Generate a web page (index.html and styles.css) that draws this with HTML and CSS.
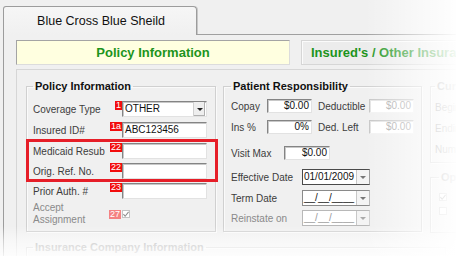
FILE: index.html
```html
<!DOCTYPE html>
<html>
<head>
    <meta charset="utf-8">
    <link rel="stylesheet" href="styles.css">
</head>
<body>
    <div class="window">
        <div class="tabstrip">
            <div class="tab">Blue Cross Blue Sheild</div>
            <div class="tabfill"></div>
        </div>
        <div class="tabpanel">
            <div class="pagetabs">
                <div class="pagetab active">Policy Information</div>
                <div class="pagetab">Insured's / Other Insurance</div>
            </div>
            <div class="page">
                <div class="groups">
                    <fieldset class="group policy">
                        <legend>Policy Information</legend>
                        <div class="row">
                            <span class="label">Coverage Type</span>
                            <span class="badge">1</span>
                            <div class="select">
                                <span class="value">OTHER</span>
                                <span class="dropbtn"><i class="arrow"></i></span>
                            </div>
                        </div>
                        <div class="row next">
                            <span class="label">Insured ID#</span>
                            <span class="badge">1a</span>
                            <div class="input">ABC123456</div>
                        </div>
                        <div class="highlight">
                            <div class="row">
                                <span class="label">Medicaid Resub</span>
                                <span class="badge">22</span>
                                <div class="input"></div>
                            </div>
                            <div class="row">
                                <span class="label">Orig. Ref. No.</span>
                                <span class="badge">22</span>
                                <div class="input"></div>
                            </div>
                        </div>
                        <div class="row after">
                            <span class="label">Prior Auth. #</span>
                            <span class="badge">23</span>
                            <div class="input"></div>
                        </div>
                        <div class="row accept">
                            <span class="label dim">Accept<br>Assignment</span>
                            <span class="badge off">27</span>
                            <div class="checkcell">
                                <span class="check">
                                    <svg width="7" height="7" viewBox="0 0 7 7"><polyline points="0.5,3 2.5,5.5 6.5,0.5" fill="none" stroke="#8a8a8a" stroke-width="1.2"/></svg>
                                </span>
                            </div>
                        </div>
                    </fieldset>

                    <fieldset class="group patient">
                        <legend>Patient Responsibility</legend>
                        <div class="money">
                            <span class="label">Copay</span>
                            <div class="input num">$0.00</div>
                            <span class="label second">Deductible</span>
                            <div class="input num off">$0.00</div>
                            <span class="label">Ins %</span>
                            <div class="input num">0%</div>
                            <span class="label second">Ded. Left</span>
                            <div class="input num off">$0.00</div>
                        </div>
                        <div class="prow visit">
                            <span class="label">Visit Max</span>
                            <div class="input num">$0.00</div>
                        </div>
                        <div class="prow date effective">
                            <span class="label">Effective Date</span>
                            <div class="datebox">
                                <span class="value">01/01/2009</span>
                                <span class="dropbtn"><i class="arrow"></i></span>
                            </div>
                        </div>
                        <div class="prow date term">
                            <span class="label">Term Date</span>
                            <div class="datebox">
                                <span class="value">__/__/____</span>
                                <span class="dropbtn"><i class="arrow"></i></span>
                            </div>
                        </div>
                        <div class="prow date reinstate">
                            <span class="label dim">Reinstate on</span>
                            <div class="datebox off">
                                <span class="value">__/__/____</span>
                                <span class="dropbtn"><i class="arrow"></i></span>
                            </div>
                        </div>
                    </fieldset>

                    <div class="sidecol">
                        <fieldset class="group current">
                            <legend>Current</legend>
                            <div class="crow"><span class="label dim">Beginning</span></div>
                            <div class="crow"><span class="label dim">Ending</span></div>
                            <div class="crow"><span class="label dim">Number</span></div>
                        </fieldset>
                        <fieldset class="group options">
                            <legend>Options</legend>
                            <div class="orow">
                                <span class="check">
                                    <svg width="7" height="7" viewBox="0 0 7 7"><polyline points="0.5,3 2.5,5.5 6.5,0.5" fill="none" stroke="#8a8a8a" stroke-width="1.2"/></svg>
                                </span>
                            </div>
                            <div class="orow"><span class="check"></span></div>
                        </fieldset>
                    </div>
                </div>

                <fieldset class="group insurance">
                    <legend>Insurance Company Information</legend>
                    <div class="crow"></div>
                </fieldset>
            </div>
        </div>
        <div class="fade"></div>
    </div>
</body>
</html>
```

FILE: styles.css
```css
body {
    margin: 0;
    background: #f0f0f0;
    font-family: "Liberation Sans", Arial, sans-serif;
}

.window {
    position: relative;
    width: 456px;
    height: 256px;
    overflow: hidden;
    padding-top: 6px;
    box-sizing: border-box;
    background: #f0f0f0;
}

/* outer tab */
.tabstrip {
    display: flex;
    height: 29px;
}
.tab {
    width: 194px;
    margin-left: 3px;
    box-sizing: border-box;
    border: 1px solid #9c9c9c;
    border-bottom: none;
    border-radius: 3px 4px 0 0;
    box-shadow: 1px 0 0 #c8c8c8;
    background: linear-gradient(#f6f6f6, #f0f0f0);
    font-size: 12.5px;
    color: #111;
    text-align: center;
    line-height: 29px;
    padding-left: 2px;
}
.tabfill {
    flex: 1;
    border-bottom: 1px solid #a0a0a0;
    height: 28px;
}

.tabpanel {
    margin-left: 3px;
    border-left: 1px solid #9c9c9c;
    padding: 5px 0 0 12px;
}

/* page tabs */
.pagetabs {
    display: flex;
    gap: 11px;
    height: 25px;
    margin-bottom: 4px;
}
.pagetab {
    flex-shrink: 0;
    width: 155px;
    box-sizing: border-box;
    border: 1px solid #d6d6d6;
    border-right: none;
    background: #ececec;
    box-shadow: inset 1px 1px 0 #fbfbfb;
    color: #1c941c;
    font-size: 13px;
    font-weight: bold;
    line-height: 23px;
    padding-left: 9px;
    white-space: nowrap;
    overflow: hidden;
}
.pagetab.active {
    width: 274px;
    padding-left: 0;
    text-align: center;
    background: #ffffe0;
    border: 1px solid;
    border-color: #a4a4a4 #dcdcdc #dcdcdc #a4a4a4;
    box-shadow: none;
}

.page {
    border: 1px solid #d6d6d6;
    border-right: none;
    padding: 10px 0 0 9px;
    height: 200px;
}

.groups {
    display: flex;
    align-items: flex-start;
}

/* group boxes */
.group {
    margin: 0;
    min-width: 0;
    flex-shrink: 0;
    box-sizing: border-box;
    border: 1px solid #d0d0d0;
    box-shadow: inset 1px 1px 0 #fafafa, 1px 1px 0 #fafafa;
}
.group legend {
    font-size: 11px;
    font-weight: bold;
    line-height: 13px;
    color: #111;
    padding: 0 2px;
}

.label {
    font-size: 10px;
    color: #3c3c3c;
    white-space: nowrap;
}
.label.dim {
    color: #8a8a8a;
}

.badge {
    align-self: flex-start;
    height: 9px;
    line-height: 9px;
    padding: 0 1px;
    font-size: 9px;
    color: #fff;
    background: #f20d0d;
}
.badge.off {
    align-self: center;
    background: #f48282;
}

.input,
.select,
.datebox {
    box-sizing: border-box;
    background: #fff;
    border: 1px solid;
    border-color: #848484 #e2e2e2 #e2e2e2 #848484;
    box-shadow: inset 1px 1px 0 #c8c8c8;
    font-size: 10px;
    color: #111;
}

/* policy */
.policy {
    width: 190px;
    padding: 8px 8px 5px 6px;
}
.policy .row {
    display: flex;
    align-items: center;
    height: 16px;
}
.policy .row .label {
    flex: 1;
}
.policy .input,
.policy .select {
    width: 85px;
    height: 16px;
    line-height: 14px;
    padding-left: 2px;
}
.policy .row.next {
    margin-top: 5px;
}
.policy .row.after {
    margin-top: 1px;
}
.policy .row.accept {
    margin-top: 3px;
    height: 24px;
}
.accept .label {
    line-height: 12px;
}

.highlight {
    margin: 1px -11px 0 -7px;
    border: 3px solid #e61e28;
    padding: 1px 8px 0 4px;
    display: flex;
    flex-direction: column;
    gap: 4px;
}

.select {
    display: flex;
    padding-right: 1px;
}
.select .value {
    flex: 1;
}
.dropbtn {
    width: 11px;
    display: flex;
    align-items: center;
    justify-content: center;
    background: #eeeeee;
    border-left: 1px solid #d0d0d0;
    box-shadow: inset -1px -1px 0 #b0b0b0;
}
.arrow {
    width: 0;
    height: 0;
    border-left: 3px solid transparent;
    border-right: 3px solid transparent;
    border-top: 3px solid #222;
}

.checkcell {
    width: 85px;
    display: flex;
    padding-left: 1px;
}
.check {
    display: flex;
    align-items: center;
    justify-content: center;
    width: 8px;
    height: 8px;
    box-sizing: border-box;
    border: 1px solid #c4c4c4;
    background: #fff;
}

/* patient */
.patient {
    width: 199px;
    margin-left: 7px;
    padding: 6px 7px 5px 7px;
}
.money {
    display: grid;
    grid-template-columns: 36px 45px 57px 45px;
    grid-template-rows: 14px 14px;
    row-gap: 7px;
    align-items: center;
}
.money .second {
    padding-left: 6px;
}
.input.num {
    height: 14px;
    line-height: 12px;
    text-align: right;
    padding-right: 2px;
}
.input.off {
    border-color: #c6c6c6 #f2f2f2 #f2f2f2 #c6c6c6;
    box-shadow: inset 1px 1px 0 #e4e4e4;
    color: #a6a6a6;
}
.prow {
    display: flex;
    align-items: center;
}
.prow.visit {
    margin-top: 12px;
}
.prow.visit .label {
    width: 53px;
}
.prow.visit .input {
    width: 46px;
}
.prow.date .label {
    width: 71px;
}
.prow.effective {
    margin-top: 9px;
}
.prow.term {
    margin-top: 5px;
}
.prow.reinstate {
    margin-top: 4px;
}
.datebox {
    display: flex;
    width: 68px;
    height: 16px;
    line-height: 14px;
    border-color: #4a4a4a #9a9a9a #4a4a4a #4a4a4a;
    box-shadow: none;
}
.term .datebox {
    border-color: #8a8a8a #b8b8b8 #8a8a8a #8a8a8a;
}
.datebox .value {
    flex: 1;
    padding-left: 1px;
}
.datebox .dropbtn {
    width: 12px;
    background: #f4f4f4;
    box-shadow: none;
    border-left: 1px solid #c8c8c8;
}
.datebox .arrow {
    border-top-color: #777;
}
.datebox.off {
    border-color: #b8b8b8 #d0d0d0 #b8b8b8 #b8b8b8;
    color: #9a9a9a;
}
.datebox.off .arrow {
    border-top-color: #aaa;
}

/* right column, clipped by the window edge */
.sidecol {
    margin-left: 8px;
    display: flex;
    flex-direction: column;
    gap: 8px;
    width: 26px;
    overflow: hidden;
}
.current {
    width: 150px;
    padding: 7px 4px 6px 4px;
}
.current legend,
.options legend {
    color: #9a9a9a;
}
.crow {
    height: 14px;
    display: flex;
    align-items: center;
}
.crow + .crow {
    margin-top: 7px;
}
.options {
    width: 150px;
    height: 62px;
    padding: 6px 8px;
}
.orow {
    height: 14px;
    display: flex;
    align-items: center;
}

.insurance {
    width: 420px;
    margin-top: 8px;
    padding: 6px;
}
.insurance legend {
    color: #a4a4a4;
}

/* white fade laid over the picture's right and bottom edges */
.fade {
    position: absolute;
    inset: 0;
    pointer-events: none;
    background:
        linear-gradient(to right, rgba(255,255,255,0) 365px, rgba(255,255,255,0.6) 420px, rgba(255,255,255,0.95) 456px),
        linear-gradient(to bottom, rgba(255,255,255,0) 226px, rgba(255,255,255,0.5) 240px, rgba(255,255,255,0.85) 256px);
}
```
